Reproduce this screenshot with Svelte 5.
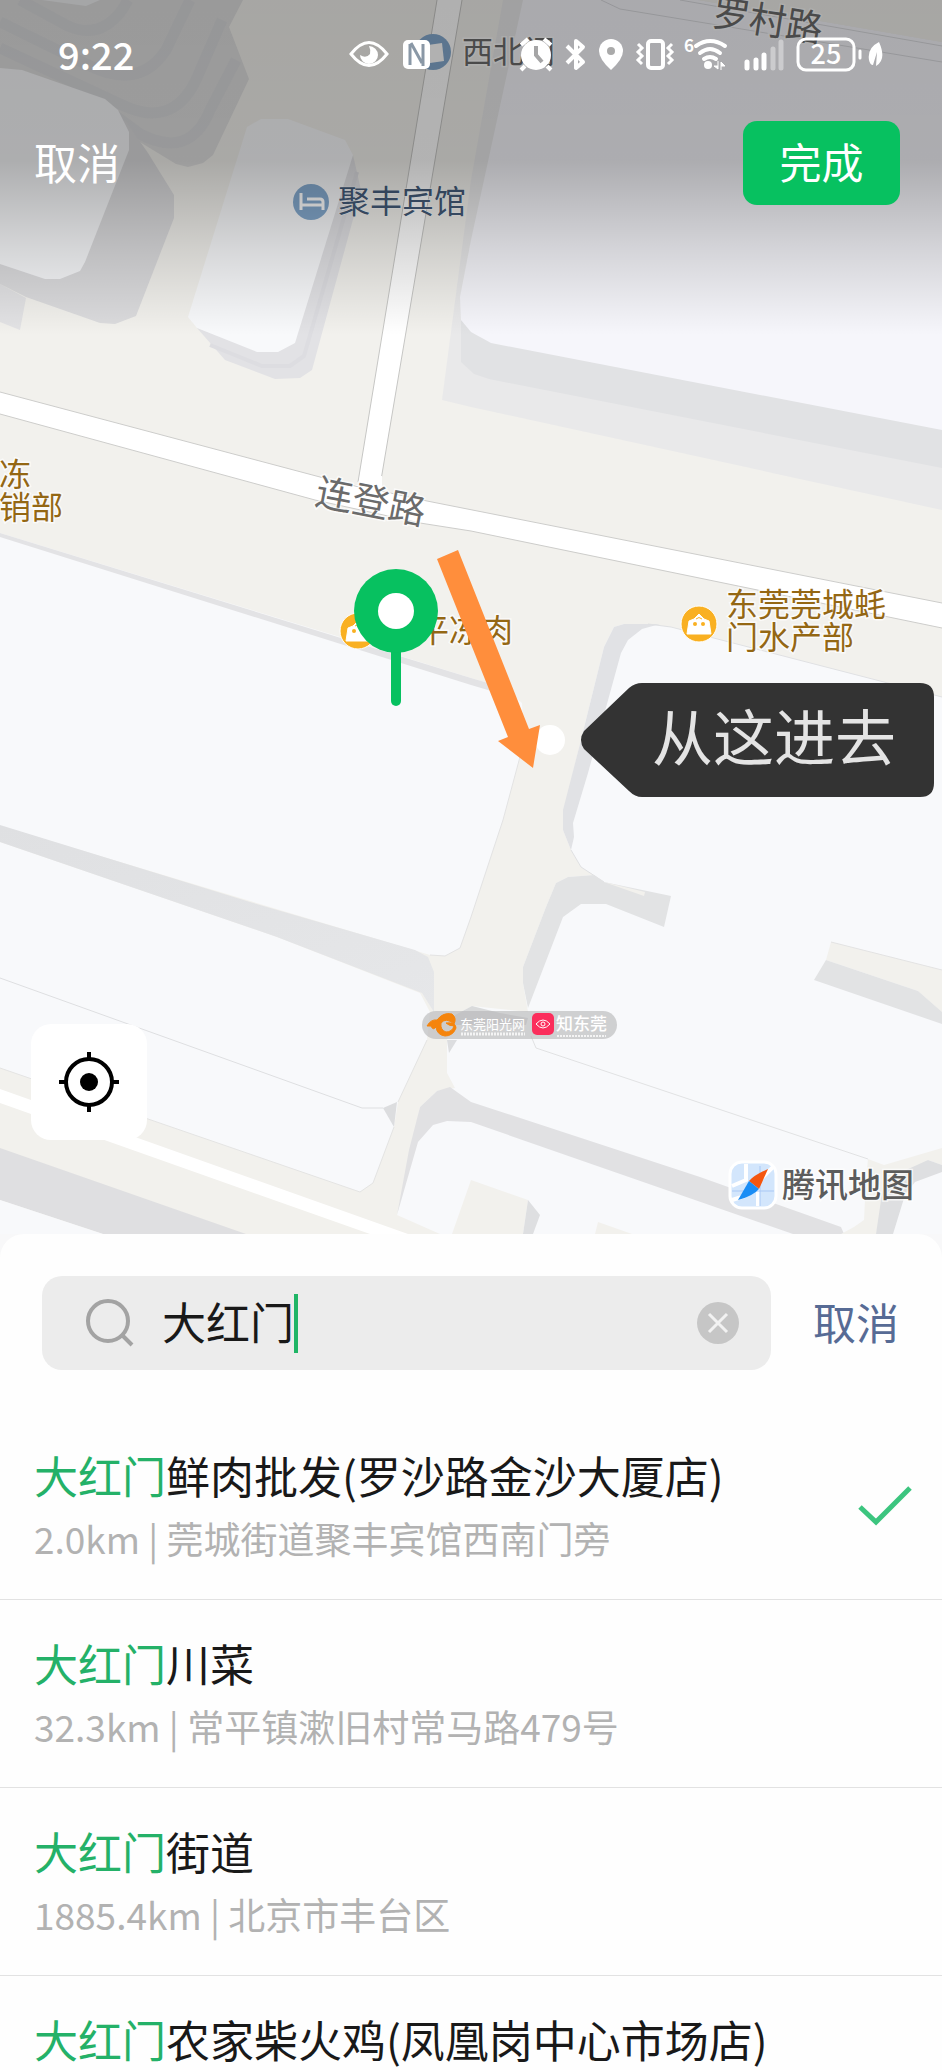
<!--
  @fileoverview Location picker.

  Map on top with the pin, an annotation and the floating controls,
  search sheet with the matching places below it.
-->

<script lang="ts">
  interface Place {
    name: string;
    distance?: string;
    address?: string;
  }

  const places: Place[] = [
    { name: '大红门鲜肉批发(罗沙路金沙大厦店)', distance: '2.0km', address: '莞城街道聚丰宾馆西南门旁' },
    { name: '大红门川菜', distance: '32.3km', address: '常平镇漱旧村常马路479号' },
    { name: '大红门街道', distance: '1885.4km', address: '北京市丰台区' },
    { name: '大红门农家柴火鸡(凤凰岗中心市场店)' }
  ];

  let query = $state('大红门');
  let selected = $state(0);

  /** Splits a name into the part that matches the query and the rest. */
  function split(name: string, q: string): [string, string] {
    return q && name.startsWith(q) ? [q, name.slice(q.length)] : ['', name];
  }
</script>

<div class="screen">
  <!-- ── Map ── -->
  <section class="map" aria-label="地图">
    <svg class="canvas" viewBox="0 0 942 1234">
      <defs>
        <linearGradient id="shade" x1="0" y1="0" x2="0" y2="1">
          <stop offset="0" stop-color="#000" stop-opacity="0.31" />
          <stop offset="0.48" stop-color="#000" stop-opacity="0.3" />
          <stop offset="0.74" stop-color="#000" stop-opacity="0.14" />
          <stop offset="1" stop-color="#000" stop-opacity="0" />
        </linearGradient>
        <linearGradient id="wall" x1="0" y1="0" x2="1" y2="1">
          <stop offset="0" stop-color="#dfe0e2" />
          <stop offset="1" stop-color="#e6e7e9" />
        </linearGradient>
      </defs>

      <rect width="942" height="1234" fill="#f2f1ed" />

      <!-- north-west towers -->
      <path d="M0 0H243L229 27L249 79L213 155L203 163L188 167L176 164L130 136L0 80Z" fill="#dfdfdf" />
      <g fill="none" stroke="#d9dadc" stroke-width="11">
        <path d="M20 0L68 26Q100 40 122 10L128 0" />
        <path d="M0 22L90 66Q140 90 166 50L190 0" />
        <path d="M0 48L120 104Q172 130 196 80L222 20" />
        <path d="M110 112L140 134Q190 160 210 110L236 60" />
      </g>
      <path d="M42 0L86 6L100 0Z" fill="#eff0f2" />
      <path d="M0 284L26 298L20 330L0 322Z" fill="#e3e3e5" />
      <path d="M125 120L148 153L174 195V218L136 316L115 324L100 323L26 297L0 284V240Z" fill="#dcdcde" />
      <path d="M0 68L22 70L105 99L118 110L129 132V150L85 262L80 271L60 279L45 279L0 264Z" fill="#f7f8fa" />

      <!-- hotel -->
      <path d="M353 155L361 190L312 370L300 378L275 379L225 360L197 328Z" fill="#e2e2e5" />
      <path d="M357 172L304 356L290 366L262 366L210 345" fill="none" stroke="#dddde1" stroke-width="4" />
      <path d="M247 127L261 119H288L345 140L353 155L295 343L278 352H257L197 328L188 317Z" fill="#f8f9fb" />

      <!-- vertical road -->
      <path d="M437 0L358 482L380 486L462 0Z" fill="#fff" />
      <path d="M437 0L358 482M462 0L380 486" stroke="#c6c6c4" />

      <!-- large block to the north-east -->
      <path d="M503 0H700L942 42V510L471 407L442 400L471 180Z" fill="#e9e9ea" />
      <path d="M461 315V362L474 374L489 379L942 468V425Z" fill="#e1e2e4" />
      <path d="M523 0H698L942 42V430L491 343L471 332L461 320L460 297L471 240Z" fill="#f6f6fb" />
      <path d="M601 0L620 9L942 62M680 0L942 46" fill="none" stroke="#d9dade" />
      <path d="M698 0H942V42Z" fill="#f2f1ed" />

      <!-- main road -->
      <path d="M0 392L320 477L427 501L942 603V628L471 531L420 523L315 500L0 414Z" fill="#fff" />
      <path d="M0 392L320 477L359 487M381 491L427 501L942 603M942 628L471 531L420 523L315 500L0 414" fill="none" stroke="#cdcdcb" />
      <path d="M360 476L358 492L382 496L382 476Z" fill="#fff" />

      <!-- west blocks -->
      <path d="M0 533L340 637L471 678L505 688L522 703L524 742L503 820L471 917L460 948L445 956L430 955L0 826Z" fill="#f8f9fb" />
      <path d="M0 533L471 678L505 688V695L471 685L0 537Z" fill="#e3e3e5" />
      <path d="M524 742L503 820L471 917L460 948L445 956L430 955" fill="none" stroke="#e3e3e3" />
      <path d="M0 842L277 937L420 993L430 1012L427 1040L398 1102L394 1127L373 1183L360 1192L0 1068Z" fill="#f8f9fb" />
      <path d="M0 825L250 902L415 950L428 957L434 972V1012L422 993L277 937L0 842Z" fill="url(#wall)" />
      <path d="M0 978L362 1108H383" fill="none" stroke="#dedfe1" />
      <path d="M383 1108L397 1102L394 1127Z" fill="#dcdddf" />
      <path d="M427 1040L398 1102M394 1127L373 1183L360 1192L0 1068" fill="none" stroke="#e4e4e3" />
      <path d="M0 1089L408 1234H370L0 1103Z" fill="#fff" />
      <path d="M0 1148L246 1234H103L0 1200Z" fill="#dfdfe1" />
      <path d="M0 1200L103 1234H0Z" fill="#f8f9fb" />

      <!-- east blocks -->
      <path
        d="M614 627L604 647L581 740L564 810L563 830L571 850L581 867L594 875L568 877L556 883L546 907L523 967V983L528 1012L472 1006L455 1015L447 1040V1073L455 1088L437 1091L420 1107L397 1215L440 1234H942V697L671 627L648 624H624Z"
        fill="#f8f9fb"
      />
      <path d="M614 627L624 624H660L642 629L628 640L621 653L588 773L573 823L574 837L571 850L563 830V810L581 740L604 647Z" fill="#e1e2e5" />
      <path d="M648 624L671 627L942 697M571 850L581 867L604 882" fill="none" stroke="#e0e1e3" />
      <path d="M594 875L604 882L671 896L664 927L606 904H581L563 917L528 1008L523 983V967L546 907L556 883L568 877Z" fill="#e2e3e4" />
      <path d="M604 882L645 892L644 896Z" fill="#f2f1ed" />
      <path d="M831 942L942 970V1012L918 991L826 960Z" fill="#f2f1ed" />
      <path d="M826 960L918 991L942 1012V1024L814 980Z" fill="#e2e3e4" />
      <path d="M831 942L942 970" stroke="#e3e3e3" />
      <path d="M455 1015L472 1006L500 1013L528 1018L526 1025H452Z" fill="#d9dadb" />
      <path d="M447 1040H457L449 1053Z" fill="#dcdddf" />
      <path d="M531 1036L536 1048L868 1159" fill="none" stroke="#e1e2e3" />

      <path d="M397 1215L409 1150L420 1107L437 1091L450 1087L471 1102L700 1177L841 1227L844 1234H793L600 1167L471 1122L447 1121L433 1125L418 1142Z" fill="#e1e1e3" />
      <path d="M471 1180L528 1200L523 1234H452Z" fill="#f2f1ed" />
      <path d="M528 1200L540 1215L533 1234H523Z" fill="#dedfe1" />
      <path d="M598 1222L632 1234H595Z" fill="#f2f1ed" />
      <path d="M868 1159L884 1165L942 1148V1165L928 1160L884 1200L876 1234H841L854 1227L864 1220L866 1180Z" fill="#f2f1ed" />
      <path d="M884 1180L928 1160L942 1165V1172L915 1182L905 1195L893 1234H876Z" fill="#dedfe1" />

      <!-- place labels -->
      <circle class="poi-blue" cx="433" cy="52" r="18" />
      <path d="M428 45L442 43L444 61L430 63Z" fill="#fff" />
      <text class="label grey" x="462" y="63" font-size="31">西北门</text>

      <circle class="poi-blue" cx="311" cy="202" r="18" />
      <path d="M301 193V210M301 205H323M323 210V202Q323 199 320 199H307" fill="none" stroke="#fff" stroke-width="3" />
      <text class="label navy" x="338" y="213" font-size="32">聚丰宾馆</text>

      <g class="label grey" font-size="37" text-anchor="middle">
        <text transform="translate(768 20) rotate(9)" y="14">罗村路</text>
        <text transform="translate(371 501) rotate(11)" y="14">连登路</text>
      </g>

      <g class="label brown" font-size="32">
        <text x="-1" y="486">冻</text>
        <text x="-1" y="519">销部</text>
        <text x="417" y="642">平冻肉</text>
        <text x="726" y="616">东莞莞城蚝</text>
        <text x="726" y="649">门水产部</text>
      </g>

      {#each [[358, 631], [699, 624]] as [x, y]}
        <g transform="translate({x} {y})">
          <circle r="18" fill="#f9b021" stroke="#fff" />
          <path d="M-10 -3L-5 -5L0 -10L5 -5L10 -3L12 10H-12Z" fill="#fff" stroke="#fff" stroke-linejoin="round" />
          <circle cx="-4" cy="0" r="2" fill="#f9b021" />
          <circle cx="4" cy="0" r="2" fill="#f9b021" />
          <path d="M-3 -5Q0 -8 3 -5" fill="none" stroke="#f9b021" />
        </g>
      {/each}

      <!-- selected position -->
      <path d="M396 640V701" stroke="#07c160" stroke-width="10" stroke-linecap="round" />
      <circle cx="396" cy="611" r="42" fill="#07c160" />
      <circle cx="396" cy="611" r="18" fill="#fff" />

      <!-- annotation: arrow and callout -->
      <circle cx="550" cy="740" r="15" fill="#fff" />
      <path d="M437 559L458 550L529 729L540 725L533 768L498 741L508 737Z" fill="#ff8e3c" />
      <path
        d="M584 731L629 688Q635 683 642 683H920Q934 683 934 697V783Q934 797 920 797H642Q635 797 629 791L584 749Q578 740 584 731Z"
        fill="#333"
      />
      <text x="652" y="761" font-size="61" fill="#e4e4e4">从这进去</text>

      <!-- watermark -->
      <rect x="422" y="1011" width="195" height="28" rx="14" fill="#b4b4b6" fill-opacity="0.6" />
      <path
        d="M427 1026Q431 1019 437 1020Q443 1012 452 1014Q457 1018 454 1024Q446 1017 441 1023Q440 1030 446 1032Q452 1032 454 1026Q449 1026 446 1023Q456 1022 456 1028Q453 1036 445 1036Q437 1035 436 1027Q433 1031 431 1026Z"
        fill="#f5840c" stroke="#f5840c"
      />
      <text x="460" y="1029" font-size="13" fill="#fff">东莞阳光网</text>
      <path d="M461 1034H525" stroke="#f4f4f4" stroke-width="3" stroke-dasharray="2 1" />
      <rect x="532" y="1013" width="22" height="22" rx="5" fill="#fb2e5c" />
      <path d="M536 1024Q543 1016 550 1024Q543 1032 536 1024Z" fill="none" stroke="#fff" />
      <circle cx="543" cy="1024" r="2" fill="none" stroke="#fff" />
      <text x="556" y="1030" font-size="17" font-weight="500" fill="#fff">知东莞</text>
      <path d="M557 1036H606" stroke="#f4f4f4" stroke-width="2" stroke-dasharray="2 1" />

      <!-- map provider -->
      <rect x="730" y="1162" width="46" height="46" rx="12" fill="#d3e6fc" stroke="#fff" stroke-width="3" />
      <path d="M746 1164V1180L732 1186M774 1166L758 1182V1206M732 1200L745 1196" fill="none" stroke="#fff" stroke-width="4" />
      <path d="M732 1191H774M760 1166V1206" stroke="#a9c8f5" />
      <path d="M768 1169L759 1189L749 1181Q754 1175 768 1169Z" fill="#f4560f" />
      <path d="M738 1200L749 1181L759 1189Q753 1196 738 1200Z" fill="#1a8df5" />
      <text class="label" x="782" y="1197" font-size="33" font-weight="500" fill="#5c5c5c">腾讯地图</text>

      <rect width="942" height="335" fill="url(#shade)" />
    </svg>

    <header class="top">
      <div class="status">
        <span class="time">9:22</span>
        <svg width="538" height="44" viewBox="345 31 538 44" role="img" aria-label="手机状态">
          <g fill="none" stroke="#fff" stroke-width="3">
            <path d="M350 54Q368 31 386 54Q368 77 350 54Z" />
          </g>
          <path d="M368 46A9 9 0 1 1 359 55Q365 59 369 54Q370 50 368 46Z" fill="#fff" />

          <rect x="402" y="40" width="27" height="29" rx="5" fill="#fff" />
          <path d="M409 65V44M410 43L421 63M422 44V66" fill="none" stroke="#8a98a6" stroke-width="3" />

          <circle cx="535" cy="55" r="15" fill="#fff" />
          <path d="M520 45L527 39M550 45L543 39M524 66L520 70M546 66L550 70" stroke="#fff" stroke-width="4" />
          <path d="M535 46V55L541 62" fill="none" stroke="#a5a5a6" stroke-width="4" />

          <path d="M566 46L582 62L575 68V41L582 47L566 63" fill="none" stroke="#fff" stroke-width="4" stroke-linejoin="round" />

          <path d="M610 39A12 12 0 0 1 622 51Q622 59 610 70Q598 59 598 51A12 12 0 0 1 610 39Z" fill="#fff" />
          <circle cx="610" cy="51" r="4" fill="#aaa" />

          <g fill="none" stroke="#fff" stroke-width="3">
            <rect x="647" y="41" width="15" height="27" rx="3" stroke-width="4" />
            <path d="M637 44L641 48L637 52L641 56L637 60L641 64M671 44L667 48L671 52L667 56L671 60L667 64" />
          </g>

          <text x="683" y="52" font-size="17" font-weight="700" fill="#fff">6</text>
          <g fill="none" stroke="#fff" stroke-width="4" stroke-linecap="round">
            <path d="M695 46Q709 36 724 46M699 53Q709 45 719 53M703 59Q709 55 715 59" />
          </g>
          <circle cx="707" cy="65" r="4" fill="#fff" />
          <path d="M717 61V69L713 66H717M720 70V62L724 66H720" fill="#fff" stroke="#fff" />

          <path d="M746 62V68M755 60V68M763 55V68" stroke="#fff" stroke-width="5" stroke-linecap="round" />
          <path d="M772 49V68M780 42V68" stroke="#fff" stroke-opacity="0.4" stroke-width="5" stroke-linecap="round" />

          <rect x="797" y="39" width="56" height="31" rx="8" fill="none" stroke="#fff" stroke-width="3" />
          <text x="825" y="64" font-size="27" font-weight="500" fill="#fff" text-anchor="middle">25</text>
          <path d="M859 51V58" stroke="#fff" stroke-width="3" stroke-linecap="round" />
          <path d="M878 42Q866 48 868 60Q869 65 872 65L876 52L875 66Q886 60 878 42Z" fill="#fff" />
        </svg>
      </div>
      <div class="toolbar">
        <button class="plain" type="button">取消</button>
        <button class="done" type="button">完成</button>
      </div>
    </header>

    <button class="locate" type="button" aria-label="定位">
      <svg width="60" height="60" viewBox="0 0 60 60">
        <circle cx="30" cy="30" r="23" fill="none" stroke="#000" stroke-width="4" />
        <circle cx="30" cy="30" r="9" />
        <path d="M30 0V8M30 52V60M0 30H8M52 30H60" stroke="#000" stroke-width="4" />
      </svg>
    </button>
  </section>

  <!-- ── Search sheet ── -->
  <section class="sheet">
    <div class="search-row">
      <label class="search-box">
        <svg width="50" height="50" viewBox="0 0 50 50" fill="none" stroke="#a3a3a3" stroke-width="4">
          <circle cx="23" cy="23" r="20" />
          <path d="M37 37L47 47" />
        </svg>
        <input type="text" aria-label="搜索地点" bind:value={query} style:width="{query.length}em" />
        <span class="caret"></span>
        <button class="clear" type="button" aria-label="清除" onclick={() => (query = '')}>
          <svg width="42" height="42" viewBox="0 0 42 42">
            <circle cx="21" cy="21" r="21" fill="#c6c6c6" />
            <path d="M12 12L30 30M30 12L12 30" stroke="#f2f2f2" stroke-width="3" />
          </svg>
        </button>
      </label>
      <button class="cancel" type="button">取消</button>
    </div>

    <ul class="results">
      {#each places as place, i}
        {@const [hit, rest] = split(place.name, query)}
        <li>
          <button class="result" type="button" onclick={() => (selected = i)}>
            <span class="text">
              <span class="name"><span class="hit">{hit}</span>{rest}</span>
              {#if place.address}
                <span class="detail">{place.distance} | {place.address}</span>
              {/if}
            </span>
            {#if i === selected}
              <svg class="check" width="54" height="40" viewBox="0 0 54 40">
                <path d="M2 21L18 36L52 2" fill="none" stroke="#3cc57f" stroke-width="5" />
              </svg>
            {/if}
          </button>
        </li>
      {/each}
    </ul>
  </section>
</div>

<style>
  :global(body) {
    margin: 0;
    background: #f8f8f9;
  }

  .screen {
    display: flex;
    flex-direction: column;
    height: 100vh;
    overflow: hidden;
    font-family: 'Noto Sans CJK SC', 'Noto Sans', sans-serif;
    color: #191919;
  }

  button {
    padding: 0;
    border: 0;
    background: none;
    font: inherit;
    color: inherit;
    cursor: pointer;
  }

  svg {
    display: block;
    flex: none;
  }

  /* ── Map ── */

  .map {
    position: relative;
    flex: none;
  }

  .canvas {
    width: 100%;
    height: auto;
  }

  .label {
    paint-order: stroke;
    stroke: rgba(255, 255, 255, 0.7);
    stroke-width: 3px;
  }

  .grey {
    fill: #6b6b6b;
  }

  .navy {
    fill: #435a78;
    stroke-width: 1px;
  }

  .brown {
    fill: #946714;
  }

  .poi-blue {
    fill: #84a9ce;
  }

  /* ── Controls over the map ── */

  .top {
    position: absolute;
    inset: 0 0 auto;
    color: #fff;
  }

  .status {
    display: flex;
    align-items: center;
    justify-content: space-between;
    height: 106px;
    padding: 0 58px;
  }

  .time {
    font-size: 38px;
    font-weight: 500;
  }

  .toolbar {
    display: flex;
    align-items: center;
    justify-content: space-between;
    padding: 15px 42px 0 34px;
  }

  .plain {
    padding-bottom: 4px;
    font-size: 43px;
  }

  .done {
    width: 157px;
    height: 84px;
    padding-bottom: 4px;
    border-radius: 14px;
    background: #07c160;
    font-size: 42px;
    line-height: 80px;
  }

  .locate {
    position: absolute;
    left: 31px;
    bottom: 94px;
    display: grid;
    place-items: center;
    width: 116px;
    height: 116px;
    border-radius: 20px;
    background: #fff;
  }

  /* ── Search ── */

  .sheet {
    display: flex;
    flex: 1;
    flex-direction: column;
    min-height: 0;
    border-radius: 24px 24px 0 0;
    background: #fefefe;
  }

  .search-row {
    display: flex;
    align-items: center;
    gap: 42px;
    padding: 42px 43px 42px 42px;
  }

  .search-box {
    display: flex;
    flex: 1;
    align-items: center;
    height: 94px;
    padding: 0 32px 0 43px;
    border-radius: 20px;
    background: #ececec;
    font-size: 44px;
  }

  input {
    min-width: 0;
    height: 60px;
    margin-left: 27px;
    padding: 0 0 4px;
    border: 0;
    outline: none;
    background: none;
    font: inherit;
    color: inherit;
    caret-color: #07c160;
  }

  .caret {
    width: 4px;
    height: 59px;
    background: #1fb566;
  }

  .clear {
    margin-left: auto;
  }

  .cancel {
    padding-bottom: 4px;
    font-size: 43px;
    color: #576b95;
  }

  /* ── Results ── */

  .results {
    flex: 1;
    margin: 0;
    padding: 0;
    overflow: hidden;
    list-style: none;
  }

  .result {
    display: flex;
    align-items: center;
    justify-content: space-between;
    width: 100%;
    height: 188px;
    padding: 0 30px 0 34px;
    border-bottom: 1px solid #e2e2e2;
    text-align: left;
  }

  .text {
    display: flex;
    flex-direction: column;
    gap: 8px;
    min-height: 122px;
  }

  .name {
    font-size: 44px;
    line-height: 60px;
  }

  .hit {
    color: #24b168;
  }

  .detail {
    font-size: 37px;
    line-height: 50px;
    color: #b2b2b2;
  }
</style>
